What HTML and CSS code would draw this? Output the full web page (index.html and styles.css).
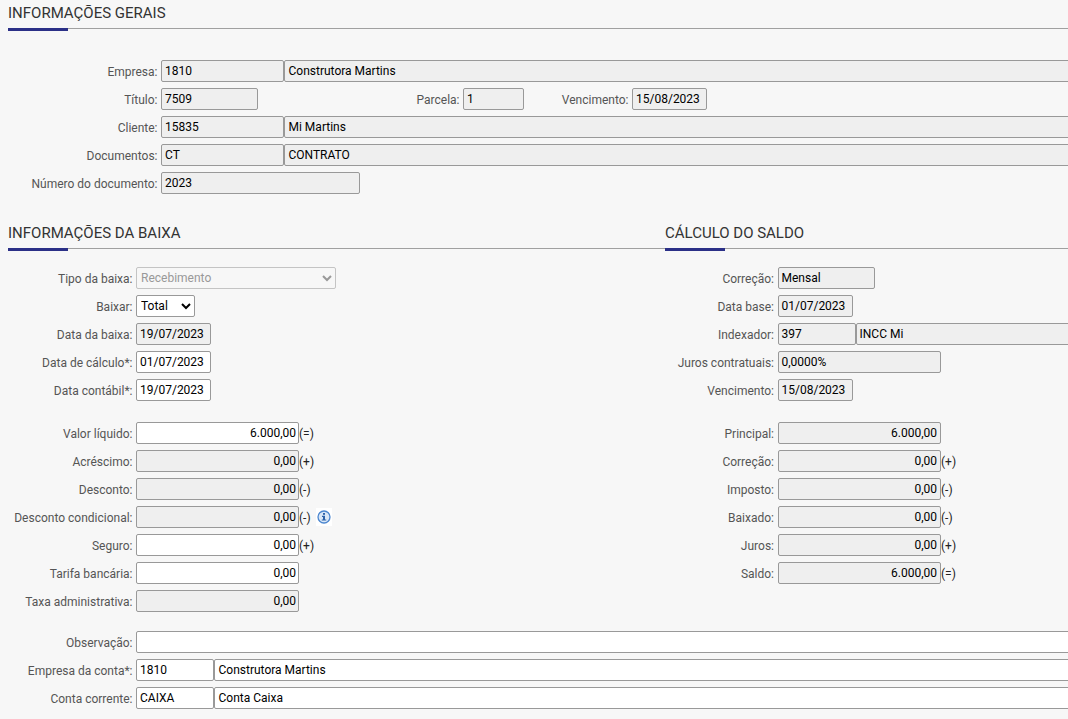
FILE: index.html
```html
<!DOCTYPE html>
<html lang="pt-BR">
<head>
<meta charset="utf-8">
<title>Baixa</title>
<link rel="stylesheet" href="styles.css">
</head>
<body>
<section class="general">
  <h2 class="head head-first">Informações gerais</h2>
  <div class="rows rows-general">
    <div class="row"><span class="label">Empresa:</span><span class="field ro w-code">1810</span><span class="field ro grow">Construtora Martins</span></div>
    <div class="row">
      <span class="label">Título:</span><span class="field ro w-titulo">7509</span>
      <span class="label label-parcela">Parcela:</span><span class="field ro w-parcela">1</span>
      <span class="label label-venc">Vencimento:</span><span class="field ro w-date">15/08/2023</span>
    </div>
    <div class="row"><span class="label">Cliente:</span><span class="field ro w-code">15835</span><span class="field ro grow">Mi Martins</span></div>
    <div class="row"><span class="label">Documentos:</span><span class="field ro w-code">CT</span><span class="field ro grow">CONTRATO</span></div>
    <div class="row"><span class="label">Número do documento:</span><span class="field ro w-doc">2023</span></div>
  </div>
</section>
<div class="cols">
  <section class="col-left">
    <h2 class="head head-first">Informações da baixa</h2>
    <div class="rows rows-left">
      <div class="row"><span class="label">Tipo da baixa:</span><select class="sel w-tipo" disabled><option>Recebimento</option></select></div>
      <div class="row"><span class="label">Baixar:</span><select class="sel w-baixar"><option>Total</option></select></div>
      <div class="row"><span class="label">Data da baixa:</span><span class="field ro w-date">19/07/2023</span></div>
      <div class="row"><span class="label">Data de cálculo*:</span><span class="field w-date">01/07/2023</span></div>
      <div class="row"><span class="label">Data contábil*:</span><span class="field w-date">19/07/2023</span></div>
      <div class="spacer"></div>
      <div class="row"><span class="label">Valor líquido:</span><span class="field num w-num">6.000,00</span><span class="sign">(=)</span></div>
      <div class="row"><span class="label">Acréscimo:</span><span class="field ro num w-num">0,00</span><span class="sign">(+)</span></div>
      <div class="row"><span class="label">Desconto:</span><span class="field ro num w-num">0,00</span><span class="sign">(-)</span></div>
      <div class="row"><span class="label">Desconto condicional:</span><span class="field ro num w-num">0,00</span><span class="sign">(-)</span>
        <svg class="info" width="16" height="18" viewBox="0 0 16 18" aria-hidden="true"><rect width="16" height="18" fill="#fff"/><circle cx="8" cy="9" r="6" fill="#d9e7f7" stroke="#4b86cf" stroke-width="1.3"/><rect x="7" y="5" width="2" height="1.8" fill="#2d62a8"/><path d="M6 7.8h3v3.6h1.2v1.2H5.8v-1.2H7V9H6z" fill="#2d62a8"/></svg>
      </div>
      <div class="row"><span class="label">Seguro:</span><span class="field num w-num">0,00</span><span class="sign">(+)</span></div>
      <div class="row"><span class="label">Tarifa bancária:</span><span class="field num w-num">0,00</span></div>
      <div class="row"><span class="label">Taxa administrativa:</span><span class="field ro num w-num">0,00</span></div>
    </div>
  </section>
  <section class="col-right">
    <h2 class="head head-right">Cálculo do saldo</h2>
    <div class="rows rows-right">
      <div class="row"><span class="label">Correção:</span><span class="field ro w-titulo">Mensal</span></div>
      <div class="row"><span class="label">Data base:</span><span class="field ro w-date">01/07/2023</span></div>
      <div class="row"><span class="label">Indexador:</span><span class="field ro w-index">397</span><span class="field ro grow">INCC Mi</span></div>
      <div class="row"><span class="label">Juros contratuais:</span><span class="field ro w-num">0,0000%</span></div>
      <div class="row"><span class="label">Vencimento:</span><span class="field ro w-date">15/08/2023</span></div>
      <div class="spacer"></div>
      <div class="row"><span class="label">Principal:</span><span class="field ro num w-num">6.000,00</span></div>
      <div class="row"><span class="label">Correção:</span><span class="field ro num w-num">0,00</span><span class="sign">(+)</span></div>
      <div class="row"><span class="label">Imposto:</span><span class="field ro num w-num">0,00</span><span class="sign">(-)</span></div>
      <div class="row"><span class="label">Baixado:</span><span class="field ro num w-num">0,00</span><span class="sign">(-)</span></div>
      <div class="row"><span class="label">Juros:</span><span class="field ro num w-num">0,00</span><span class="sign">(+)</span></div>
      <div class="row"><span class="label">Saldo:</span><span class="field ro num w-num">6.000,00</span><span class="sign">(=)</span></div>
    </div>
  </section>
</div>
<section class="bottom rows rows-left">
  <div class="row"><span class="label">Observação:</span><span class="field grow"></span></div>
  <div class="row"><span class="label">Empresa da conta*:</span><span class="field w-conta">1810</span><span class="field grow">Construtora Martins</span></div>
  <div class="row"><span class="label">Conta corrente:</span><span class="field w-conta">CAIXA</span><span class="field grow">Conta Caixa</span></div>
</section>
</body>
</html>
```
FILE: styles.css
```css
* { box-sizing: border-box; }
html, body { height: 100%; }
body {
  margin: 0;
  overflow: hidden;
  background: #f7f7f7;
  font-family: Roboto, "Liberation Sans", sans-serif;
  font-size: 12px;
  color: #000;
}
.head {
  display: flex;
  flex-direction: column;
  height: 31px;
  margin: 0;
  font-size: 15px;
  font-weight: 400;
  line-height: 26px;
  color: #333;
  text-transform: uppercase;
  background: linear-gradient(#a0a0a0, #a0a0a0) 0 28px / 100% 1px no-repeat;
}
.head::after {
  content: "";
  display: block;
  width: 60px;
  height: 3px;
  margin-top: 2px;
  background: #2b3087;
}
.head-first { margin-left: 8px; }
.head-right { padding-left: 8px; }
.rows { display: flex; flex-direction: column; gap: 6px; }
.rows-general { --label: 157.5px; margin-top: 29px; }
.rows-left { --label: 132.5px; }
.rows-right { --label: 117px; --label-gap: 4px; }
.col-left .rows, .col-right .rows { margin-top: 16px; }
.cols { display: grid; grid-template-columns: 657px 1fr; margin-top: 26px; }
.col-left, .col-right { min-width: 0; }
.bottom { margin-top: 19px; }
.spacer { height: 9px; }
.row { display: flex; align-items: flex-start; height: 22px; }
.label {
  flex: none;
  width: var(--label);
  margin-right: var(--label-gap, 3.5px);
  text-align: right;
  line-height: 24px;
  color: #555;
  white-space: nowrap;
}
.label-parcela { width: 201.5px; }
.label-venc { width: 104.5px; }
.field {
  flex: none;
  height: 22px;
  padding: 0 3px;
  border: 1px solid #999;
  border-radius: 2px;
  background: #fff;
  line-height: 20px;
  white-space: nowrap;
}
.ro { background: #efefef; }
.num { text-align: right; padding-right: 2px; }
.grow { flex: 1 0 0; margin-right: -4px; padding-left: 3.5px; }
.rows-right .field { padding-left: 2.5px; }
.rows-right .num { padding-right: 3px; }
.w-code { width: 123px; }
.w-titulo { width: 97px; }
.w-parcela { width: 61px; }
.w-date { width: 75px; }
.w-doc { width: 199px; }
.w-num { width: 163px; }
.w-index { width: 78px; }
.w-conta { width: 78px; }
.w-tipo { width: 200px; }
.w-baixar { width: 59px; }
.sel {
  flex: none;
  height: 22px;
  padding: 0;
  border: 1px solid #999;
  border-radius: 2px;
  background: #fff;
  font: inherit;
  color: #000;
}
.sel:disabled { color: #999; border-color: #c4c4c4; background: #f7f7f7; opacity: 1; }
.sign { margin-left: 0; line-height: 24px; color: #222; }
.info { flex: none; margin: 2px 0 0 5px; }
```
